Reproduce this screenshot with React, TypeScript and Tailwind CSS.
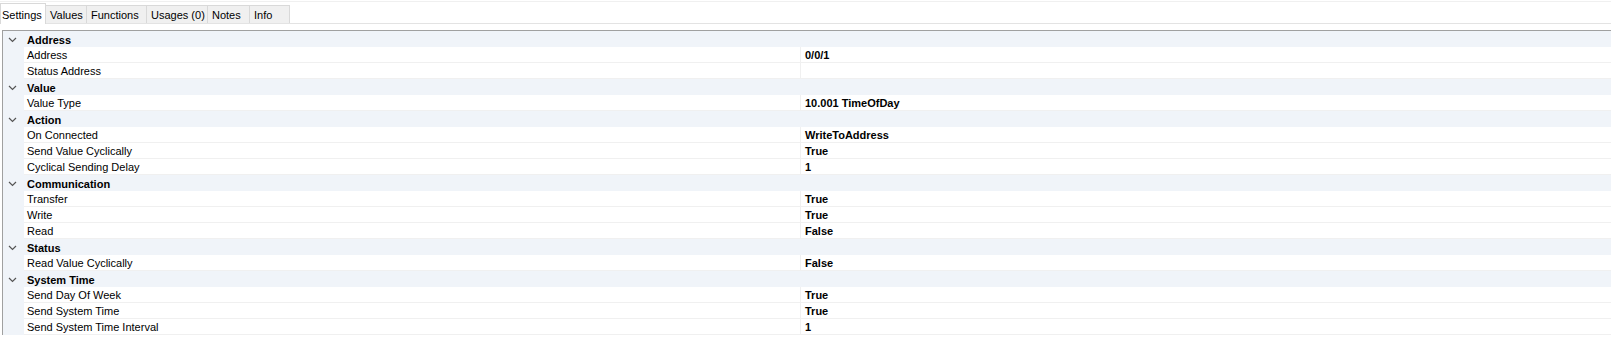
import React from "react";

type Row = { cat: true; label: string } | { cat?: false; label: string; value: string };

const rows: Row[] = [
  { cat: true, label: "Address" },
  { label: "Address", value: "0/0/1" },
  { label: "Status Address", value: "" },
  { cat: true, label: "Value" },
  { label: "Value Type", value: "10.001 TimeOfDay" },
  { cat: true, label: "Action" },
  { label: "On Connected", value: "WriteToAddress" },
  { label: "Send Value Cyclically", value: "True" },
  { label: "Cyclical Sending Delay", value: "1" },
  { cat: true, label: "Communication" },
  { label: "Transfer", value: "True" },
  { label: "Write", value: "True" },
  { label: "Read", value: "False" },
  { cat: true, label: "Status" },
  { label: "Read Value Cyclically", value: "False" },
  { cat: true, label: "System Time" },
  { label: "Send Day Of Week", value: "True" },
  { label: "Send System Time", value: "True" },
  { label: "Send System Time Interval", value: "1" },
];

const tabs = [
  { name: "Settings", w: "w-[46px]" },
  { name: "Values", w: "w-[41px]" },
  { name: "Functions", w: "w-[60px]" },
  { name: "Usages (0)", w: "w-[61px]" },
  { name: "Notes", w: "w-[42px]" },
  { name: "Info", w: "w-[40px]" },
];

function Chevron() {
  return (
    <svg width="9" height="6" viewBox="0 0 9 6" className="block">
      <path d="M1 1 L4.5 4.5 L8 1" fill="none" stroke="#555" strokeWidth="1.2" />
    </svg>
  );
}

export default function App() {
  return (
    <div
      className="w-[1611px] h-[350px] bg-white text-[11px] text-black overflow-hidden"
      style={{ fontFamily: '"Liberation Sans", Arial, sans-serif' }}
    >
      <div className="h-[2px] border-b border-[#f0f0f0]" />
      <div className="flex items-end h-[22px] border-b border-[#e3e3e3]">
        {tabs.map((t, i) =>
          i === 0 ? (
            <div
              key={t.name}
              className={`${t.w} h-[21px] bg-white border border-b-0 border-[#d9d9d9] pl-[1px] pt-[3px] leading-[16px] -mb-[1px] relative whitespace-nowrap`}
            >
              {t.name}
            </div>
          ) : (
            <div
              key={t.name}
              className={`${t.w} h-[18px] bg-[#f0f0f0] border border-l-0 border-b-0 border-[#d9d9d9] pl-[4px] pt-[1px] leading-[17px] whitespace-nowrap`}
            >
              {t.name}
            </div>
          )
        )}
        <div className="flex-1" />
      </div>
      <div className="h-[6px]" />
      <div className="ml-[2px] border-l border-t border-t-[#a0a0a0] border-l-[#a0a0a0]">
        {rows.map((r, i) =>
          r.cat ? (
            <div key={i} className="flex h-[16px] bg-[#f0f4f9] items-center">
              <div className="w-[21px] flex justify-start pl-[5px] pt-[1px]">
                <Chevron />
              </div>
              <div className="pl-[3px] font-bold leading-[16px] pt-[1px]">{r.label}</div>
            </div>
          ) : (
            <div key={i} className="flex h-[16px]">
              <div className="w-[21px] bg-[#f0f4f9]" />
              <div className="w-[777px] border-b border-[#f0f0f0] border-r border-r-[#f0f0f0] pl-[3px] leading-[15px] pt-[1px]">
                {r.label}
              </div>
              <div className="flex-1 border-b border-[#f0f0f0] pl-[4px] font-bold leading-[15px] pt-[1px]">{r.value}</div>
            </div>
          )
        )}
      </div>
    </div>
  );
}
